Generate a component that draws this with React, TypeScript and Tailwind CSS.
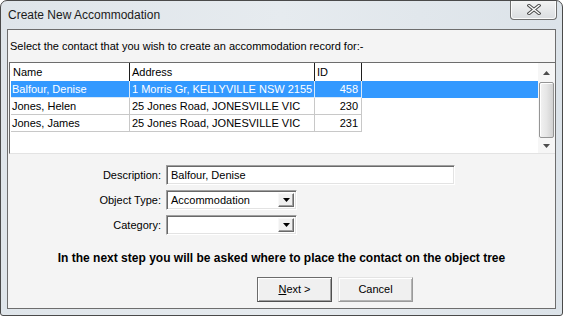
import React from "react";

const rows = [
  { name: "Balfour, Denise", addr: "1 Morris Gr, KELLYVILLE NSW 2155", id: "458", sel: true },
  { name: "Jones, Helen", addr: "25 Jones Road, JONESVILLE VIC", id: "230", sel: false },
  { name: "Jones, James", addr: "25 Jones Road, JONESVILLE VIC", id: "231", sel: false },
];

function DownTri({ color = "#000" }: { color?: string }) {
  return (
    <svg width="7" height="4" viewBox="0 0 7 4">
      <path d="M0 0H7L3.5 4Z" fill={color} />
    </svg>
  );
}

function UpTri({ color = "#000" }: { color?: string }) {
  return (
    <svg width="7" height="4" viewBox="0 0 7 4">
      <path d="M0 4H7L3.5 0Z" fill={color} />
    </svg>
  );
}

function Combo({ value }: { value: string }) {
  return (
    <div className="w-[131px] h-[20px] border border-t-[#a0a0a0] border-l-[#a0a0a0] border-r-[#ffffff] border-b-[#ffffff] shadow-[inset_1px_1px_0_#696969,inset_-1px_-1px_0_#e3e3e3] bg-white flex items-stretch p-[2px]">
      <div className="flex-1 pl-[2px] flex items-center text-[11px] leading-none text-black">{value}</div>
      <div className="w-[16px] bg-[#f0f0f0] border border-t-[#f8f8f8] border-l-[#f8f8f8] border-r-[#696969] border-b-[#696969] shadow-[inset_-1px_-1px_0_#a0a0a0] flex items-center justify-center">
        <DownTri />
      </div>
    </div>
  );
}

export default function App() {
  return (
    <div
      className="w-[563px] h-[316px] flex flex-col border border-[#4a4a4a] rounded-t-[7px] rounded-b-[3px] bg-gradient-to-r from-[#dfe5ea] via-[#e6ebef] to-[#dce3e9] overflow-hidden"
      style={{ fontFamily: '"Liberation Sans", Arial, sans-serif' }}
    >
      {/* Title bar */}
      <div className="h-[28px] flex items-start justify-between shrink-0">
        <div className="pl-[7px] h-[28px] flex items-center text-[12px] text-[#1b1b1b]">Create New Accommodation</div>
        <div className="mr-[5px] -mt-[1px] w-[47px] h-[20px] border border-[#6f6f6f] border-t-0 rounded-b-[4px] bg-gradient-to-b from-[#f4f4f4] to-[#dadde0] shadow-[inset_0_0_0_1px_#fbfbfb] flex items-center justify-center">
          <svg width="14" height="11" viewBox="0 0 14 11">
            <path d="M2 1.5 L12 9.5 M12 1.5 L2 9.5" stroke="#4b4b4b" strokeWidth="3.4" strokeLinecap="square" />
            <path d="M2 1.5 L12 9.5 M12 1.5 L2 9.5" stroke="#ffffff" strokeWidth="1.4" strokeLinecap="square" />
          </svg>
        </div>
      </div>

      {/* Client area */}
      <div className="mx-[6px] h-[280px] shrink-0 border border-[#6d6d6d] bg-[#f4f4f4] flex flex-col text-black">
        <div className="h-[32px] pl-[2px] flex items-center text-[11px] leading-none">
          Select the contact that you wish to create an accommodation record for:-
        </div>

        {/* List */}
        <div className="h-[92px] ml-[1px] border-t border-t-[#6d6d6d] border-l border-l-[#696969] border-b border-b-[#e3e3e3] bg-white flex">
          <div className="flex-1 pl-[1px]">
            <div className="flex h-[18px] text-[11px] leading-none">
              <div className="w-[119px] border-r border-r-[#1e1e1e] pl-[2px] flex items-center">Name</div>
              <div className="w-[185px] border-r border-r-[#1e1e1e] pl-[2px] flex items-center">Address</div>
              <div className="w-[47px] border-r border-r-[#1e1e1e] pl-[2px] flex items-center">ID</div>
            </div>
            {rows.map((r) => (
              <div
                key={r.id}
                className={
                  "flex h-[17px] text-[11px] leading-none " +
                  (r.sel ? "bg-[#3399ff] text-white" : "text-black")
                }
              >
                <div className={"w-[119px] border-r border-b pl-[1px] flex items-center " + (r.sel ? "border-[#d8e8f8]" : "border-[#c8c8c8] bg-white")}>{r.name}</div>
                <div className={"w-[185px] border-r border-b pl-[2px] flex items-center " + (r.sel ? "border-[#d8e8f8]" : "border-[#c8c8c8] bg-white")}>{r.addr}</div>
                <div className={"w-[47px] border-r border-b pr-[3px] flex items-center justify-end " + (r.sel ? "border-[#d8e8f8]" : "border-[#c8c8c8] bg-white")}>{r.id}</div>
              </div>
            ))}
          </div>
          {/* Scrollbar */}
          <div className="w-[17px] bg-[#f6f6f6] flex flex-col items-center">
            <div className="h-[19px] w-full flex items-center justify-center"><UpTri color="#4d4d4d" /></div>
            <div className="w-[15px] h-[56px] rounded-[2px] border border-[#959595] bg-gradient-to-r from-[#f2f2f2] via-[#e6e6e6] to-[#d2d2d2] shadow-[inset_1px_1px_0_#ffffff]" />
            <div className="flex-1 w-full flex items-center justify-center"><DownTri color="#4d4d4d" /></div>
          </div>
        </div>

        {/* Form */}
        <div className="mt-[11px] flex flex-col gap-[5px] text-[11px] leading-none">
          <div className="flex items-center h-[20px]">
            <div className="w-[153px] text-right">Description:</div>
            <div className="ml-[5px] w-[289px] h-[20px] border border-t-[#a0a0a0] border-l-[#a0a0a0] border-r-[#ffffff] border-b-[#ffffff] shadow-[inset_1px_1px_0_#696969,inset_-1px_-1px_0_#e3e3e3] bg-white pl-[4px] flex items-center">
              Balfour, Denise
            </div>
          </div>
          <div className="flex items-center h-[20px]">
            <div className="w-[153px] text-right">Object Type:</div>
            <div className="ml-[5px]"><Combo value="Accommodation" /></div>
          </div>
          <div className="flex items-center h-[20px]">
            <div className="w-[153px] text-right">Category:</div>
            <div className="ml-[5px]"><Combo value="" /></div>
          </div>
        </div>

        <div className="mt-[16px] h-[14px] flex items-center justify-center text-[12px] font-bold leading-none">
          In the next step you will be asked where to place the contact on the object tree
        </div>

        <div className="mt-[12px] ml-[249px] flex gap-[6px] text-[11px] leading-none">
          <div className="w-[75px] h-[25px] bg-[#f0f0f0] border border-t-[#6b6b6b] border-l-[#6b6b6b] border-r-[#505050] border-b-[#505050] shadow-[inset_1px_1px_0_#ffffff,inset_-1px_-1px_0_#a0a0a0] flex items-center justify-center">
            <span><span className="underline">N</span>ext &gt;</span>
          </div>
          <div className="w-[75px] h-[25px] bg-[#f0f0f0] border border-t-[#e3e3e3] border-l-[#e3e3e3] border-r-[#9a9a9a] border-b-[#9a9a9a] shadow-[inset_1px_1px_0_#ffffff,inset_-1px_-1px_0_#b4b4b4] flex items-center justify-center">
            Cancel
          </div>
        </div>
      </div>
    </div>
  );
}
